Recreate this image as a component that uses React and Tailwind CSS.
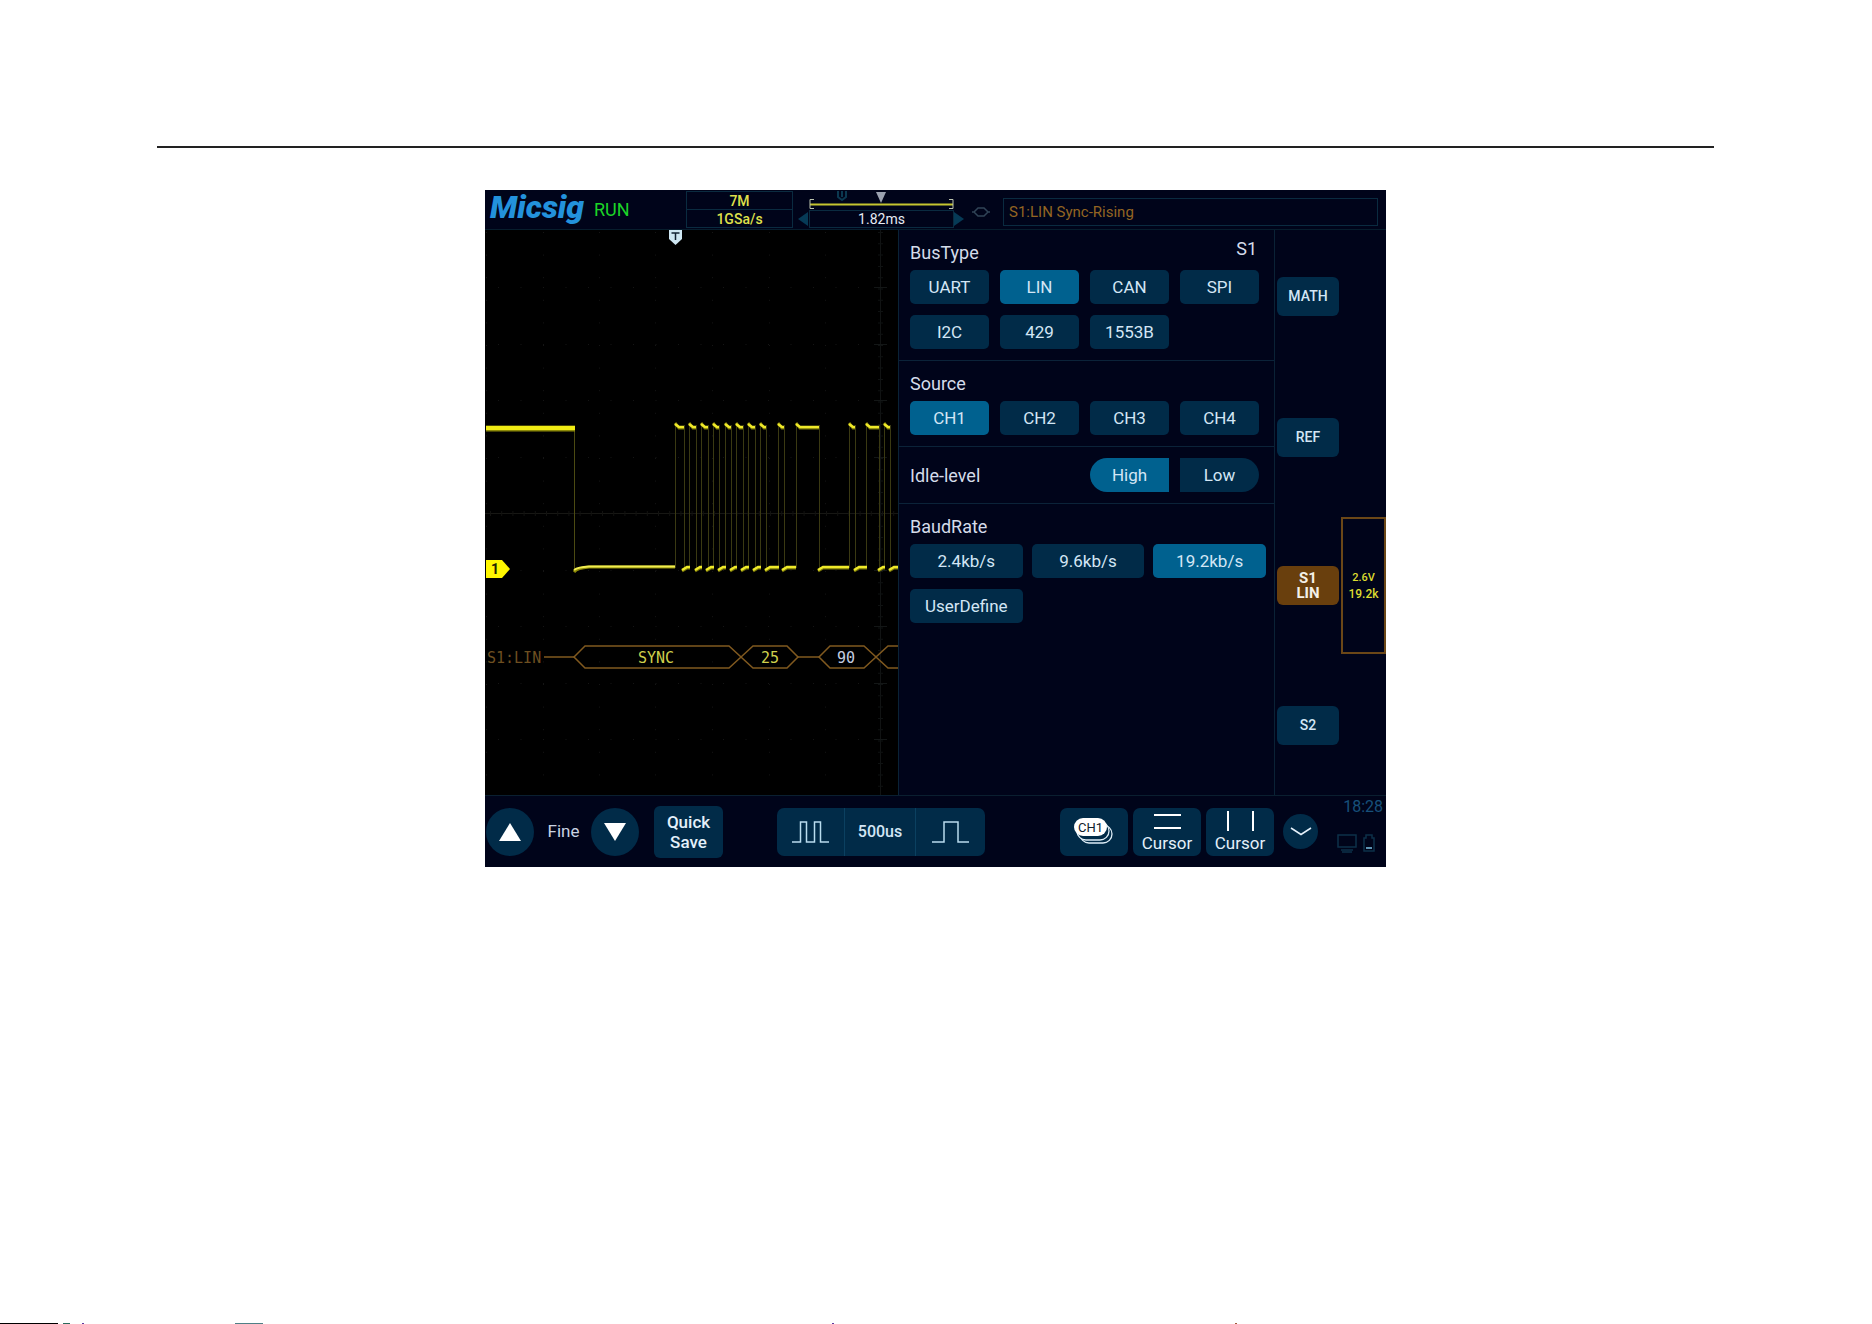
import React from "react";

const HIGH = [[190, 199], [204, 211], [216, 223], [228, 234], [240, 246], [251, 258], [263, 270], [275, 281], [293, 299], [311, 334], [364, 370], [381, 394], [399, 405]];
const LOW = [[198, 205], [211, 217], [222, 229], [234, 241], [246, 252], [257, 264], [269, 276], [281, 294], [298, 311], [334, 364], [370, 382], [394, 400], [405, 413]];
const ROWS = [57, 114, 170, 227, 340, 396, 453, 509];
const COLS = [1, 58, 114, 170, 227, 284, 340];

function Choice({ children, active, shape = "rounded-[5px]" }) {
  return (
    <button
      type="button"
      aria-pressed={!!active}
      className={`h-[34px] min-w-0 text-[17px] leading-none text-[#d3e6f5] ${shape} ${active ? "bg-[#00618f]" : "bg-[#012b48]"}`}
    >
      {children}
    </button>
  );
}

function Section({ title, aside, children, last }) {
  return (
    <section className={`pl-[11px] pt-[11px] pb-[11px] ${last ? "" : "border-b border-[#0b2339]"}`}>
      <div className="mb-[5px] flex h-6 items-center justify-between pr-[17px]">
        <h2 className="text-[18px] leading-6 text-[#d5dcea]">{title}</h2>
        {aside && <span className="self-start text-[18px] leading-4 text-[#d5dcea]">{aside}</span>}
      </div>
      {children}
    </section>
  );
}

function Scope() {
  return (
    <svg className="h-full w-full bg-black" viewBox="0 0 413 565" preserveAspectRatio="xMinYMin slice" aria-label="Channel 1 waveform">
      <g stroke="#151515" strokeWidth="1">
        {ROWS.map((y) => <path key={y} d={`M13 ${y}.5H413`} strokeDasharray="1 21.5" />)}
        {COLS.map((x) => <path key={x} d={`M${x}.5 2V565`} strokeDasharray="1 21.6" />)}
        <path d="M0 283.5H413" stroke="#171714" />
        <path d="M5 283.5H413" strokeWidth="5" strokeDasharray="1 10.2" stroke="#121210" />
        <path d="M395.5 0V565" stroke="#111313" />
        <path d="M395.5 2V565" strokeWidth="5" strokeDasharray="1 10.3" stroke="#0f1212" />
        {ROWS.map((y) => <path key={y} d={`M389 ${y}.5H402`} stroke="#131616" />)}
      </g>

      <g stroke="#3a3912" strokeWidth="1">
        <path d="M89.5 198V340M190.5 195V338" stroke="#4b4a12" />
        {HIGH.map(([a, b]) => <path key={a} d={`M${a}.5 195V338M${b}.5 195V338`} />)}
      </g>
      <path d="M1 198.5H90" stroke="#8d8a08" strokeWidth="6" />
      <path d="M1 198H90" stroke="#f0ec14" strokeWidth="4" />
      <path d="M89 342Q92 338 104 337H190" fill="none" stroke="#8d8a08" strokeWidth="3" />
      <path d="M89 340Q93 337 104 336.500H190" fill="none" stroke="#f2ee50" strokeWidth="2" />
      <g fill="none" strokeWidth="3" stroke="#7d7a08">
        {HIGH.map(([a, b]) => <path key={a} d={`M${a} 193L${a + 4} 198H${b}`} />)}
        {LOW.map(([a, b]) => <path key={a} d={`M${a - 1} 341L${a + 4} 338H${b}`} />)}
      </g>
      <g fill="none" stroke="#efe92a" strokeWidth="2.500">
        {HIGH.map(([a, b]) => <path key={a} d={`M${a} 194L${a + 4} 197H${b}`} />)}
        {LOW.map(([a, b]) => <path key={a} d={`M${a - 1} 340L${a + 4} 337H${b}`} />)}
      </g>

      <path d="M184 0H197V9L190.500 15L184 9Z" fill="#cfe7f3" />
      <path d="M186.500 3H194.500M190.500 3V10" stroke="#123" strokeWidth="1.500" />
      <path d="M1 330H17L25 339L17 348H1Z" fill="#fff700" />
      <text x="6" y="344" fontFamily="Roboto, sans-serif" fontSize="14" fontWeight="700" fill="#222200">1</text>

      <g fill="none" stroke="#80591f" strokeWidth="1.500">
        <path d="M59 427H89M313 427H334" />
        <path d="M89 427L100 416H244L256 427L244 438H100Z" />
        <path d="M256 427L268 416H302L313 427L302 438H268Z" />
        <path d="M334 427L345 416H379L391 427L379 438H345Z" />
        <path d="M413 416H403L391 427L403 438H413" />
      </g>
      <g fontFamily="'DejaVu Sans Mono', monospace" fontSize="15">
        <text x="2" y="432.500" fill="#6e4f20">S1:LIN</text>
        <text x="153" y="432.500" fill="#cfd04c">SYNC</text>
        <text x="276" y="432.500" fill="#cfd04c">25</text>
        <text x="352" y="432.500" fill="#c3cde0">90</text>
      </g>
    </svg>
  );
}

function Header() {
  return (
    <header className="flex h-10 items-start border-b border-[#071d2d]">
      <div className="w-[109px] pl-[5px] font-[Roboto,sans-serif] text-[32px] font-black italic leading-[35px] text-[#2392dc]">Micsig</div>
      <div className="flex-1 pt-[8px] text-[18px] leading-6 text-[#1bd527]">RUN</div>
      <div className="mt-px h-[37px] w-[107px] border border-[#0a2b40] text-center text-[14px] font-medium text-[#dfe04b]">
        <div className="h-[18px] border-b border-[#0a2b40] leading-[19px]">7M</div>
        <div className="leading-[19px]">1GSa/s</div>
      </div>
      <svg className="ml-[5px] mt-[22px] h-[14px] w-[10px]" viewBox="0 0 10 14"><path d="M10 0V14L0 7Z" fill="#063a56" /></svg>
      <div className="ml-px w-[145px]">
        <svg className="block h-5 w-full" viewBox="0 0 145 20">
          <path d="M29 1V7L33 10L37 7V1M33 1V7" fill="none" stroke="#0b3850" strokeWidth="2" />
          <path d="M67 2H77L72 13Z" fill="#9ba2b0" />
          <path d="M1 14.500H144" stroke="#c5c530" strokeWidth="2" />
          <path d="M5 9.500H1V18.500H5M140 9.500H144V18.500H140" fill="none" stroke="#bcc4ae" />
        </svg>
        <div className="h-[18px] border border-[#0a2b40] text-center text-[14px] leading-[17px] text-[#e6ebf4]">1.82ms</div>
      </div>
      <svg className="mt-[22px] h-[14px] w-[10px]" viewBox="0 0 10 14"><path d="M0 0V14L10 7Z" fill="#063a56" /></svg>
      <svg className="mx-[8px] mt-[17px] h-[10px] w-[18px]" viewBox="0 0 18 10"><path d="M0 5H2L6 1H12L16 5L12 9H6L2 5M16 5H18" fill="none" stroke="#304457" strokeWidth="1.500" /></svg>
      <div className="ml-[5px] mr-[8px] mt-[8px] h-7 w-[375px] border border-[#0a2b40] pl-[5px] text-[15px] leading-[26px] text-[#936522]">S1:LIN Sync-Rising</div>
    </header>
  );
}

function BusPanel() {
  return (
    <div className="border-x border-[#0a2236] bg-[#00041a]">
      <Section title="BusType" aside="S1">
        <div className="grid grid-cols-4 gap-[11px] pr-[15px]">
          <Choice>UART</Choice><Choice active>LIN</Choice><Choice>CAN</Choice><Choice>SPI</Choice>
          <Choice>I2C</Choice><Choice>429</Choice><Choice>1553B</Choice>
        </div>
      </Section>
      <Section title="Source">
        <div className="grid grid-cols-4 gap-[11px] pr-[15px]">
          <Choice active>CH1</Choice><Choice>CH2</Choice><Choice>CH3</Choice><Choice>CH4</Choice>
        </div>
      </Section>
      <section className="grid grid-cols-4 items-center gap-[11px] border-b border-[#0b2339] py-[11px] pl-[11px] pr-[15px]">
        <h2 className="col-span-2 text-[18px] text-[#d5dcea]">Idle-level</h2>
        <Choice active shape="rounded-l-full">High</Choice>
        <Choice shape="rounded-r-full">Low</Choice>
      </section>
      <Section title="BaudRate" last>
        <div className="grid grid-cols-3 gap-x-[9px] gap-y-[11px] pr-[8px]">
          <Choice>2.4kb/s</Choice><Choice>9.6kb/s</Choice><Choice active>19.2kb/s</Choice>
          <Choice>UserDefine</Choice>
        </div>
      </Section>
    </div>
  );
}

const SIDE = "h-[39px] w-[62px] shrink-0 rounded-[6px] text-[14px] font-medium text-[#d3e6f5]";

function SideBar() {
  return (
    <aside className="flex flex-col pb-[50px] pl-[2px] pt-[47px]">
      <button type="button" className={`${SIDE} bg-[#012b48]`}>MATH</button>
      <button type="button" className={`${SIDE} mt-[102px] bg-[#012b48]`}>REF</button>
      <div className="mt-[60px] flex items-center justify-between">
        <button type="button" className="flex h-[39px] w-[62px] shrink-0 flex-col items-center justify-center rounded-[6px] bg-[#693f0d] text-[15px] font-bold leading-[15px] text-[#f4f0e8]">
          <span>S1</span>
          <span>LIN</span>
        </button>
        <div className="flex h-[137px] w-[45px] flex-col items-center justify-center border-2 border-[#6b4717] text-[#dcdc30]">
          <span className="text-[11px] font-medium leading-4">2.6V</span>
          <span className="text-[12px] font-medium leading-4">19.2k</span>
        </div>
      </div>
      <button type="button" className={`${SIDE} mt-[52px] bg-[#012b48]`}>S2</button>
    </aside>
  );
}

const KEY = "shrink-0 bg-[#012b48] text-[#e4f0fa]";

function Footer() {
  return (
    <footer className="flex h-[72px] items-center border-t border-[#0a1f30] pl-px">
      <button type="button" aria-label="Increase" className={`${KEY} flex h-12 w-12 items-center justify-center rounded-full`}>
        <svg className="h-[18px] w-[22px]" viewBox="0 0 22 18"><path d="M11 0L22 18H0Z" fill="#fff" /></svg>
      </button>
      <span className="w-[57px] pl-[2px] text-center text-[17px] text-[#c9d3e2]">Fine</span>
      <button type="button" aria-label="Decrease" className={`${KEY} flex h-12 w-12 items-center justify-center rounded-full`}>
        <svg className="h-[18px] w-[22px]" viewBox="0 0 22 18"><path d="M11 18L22 0H0Z" fill="#fff" /></svg>
      </button>
      <button type="button" className={`${KEY} ml-[15px] h-[52px] w-[69px] rounded-[6px] text-[17px] font-medium leading-5`}>Quick<br />Save</button>
      <div className="ml-[54px] mr-auto flex h-12 overflow-hidden rounded-[7px]">
        <button type="button" aria-label="Shorter time base" className={`${KEY} flex w-[67px] items-center justify-center`}>
          <svg className="h-[22px] w-[37px]" viewBox="0 0 37 22"><path d="M0 21H8.500V1H14.500V21H22.500V1H28.500V21H37" fill="none" stroke="#b9dcee" strokeWidth="1.500" /></svg>
        </button>
        <div className="flex w-[72px] items-center justify-center border-x border-[#0b4060] bg-[#012b48] text-[16px] font-medium text-[#d3e6f5]">500us</div>
        <button type="button" aria-label="Longer time base" className={`${KEY} flex w-[69px] items-center justify-center`}>
          <svg className="h-[22px] w-[37px]" viewBox="0 0 37 22"><path d="M0 21H12V1H26V21H37" fill="none" stroke="#b9dcee" strokeWidth="1.500" /></svg>
        </button>
      </div>
      <div className="flex items-center gap-[5px]">
        <button type="button" className={`${KEY} flex h-12 w-[68px] items-center justify-center rounded-[7px]`}>
          <svg className="h-[30px] w-[42px]" viewBox="0 0 42 30">
            <rect x="7" y="8" width="32" height="18" rx="9" fill="#012b48" stroke="#dcecf6" strokeWidth="1.300" />
            <rect x="4" y="5" width="32" height="18" rx="9" fill="#012b48" stroke="#dcecf6" strokeWidth="1.300" />
            <rect x="1" y="1" width="33" height="18" rx="9" fill="#fff" />
            <text x="17.500" y="14.500" textAnchor="middle" fontFamily="Roboto, sans-serif" fontSize="13" fill="#10202c">CH1</text>
          </svg>
        </button>
        <button type="button" className={`${KEY} flex h-12 w-[68px] flex-col items-center justify-between rounded-[7px] pb-[2px] pt-[3px] text-[17px] leading-[22px]`}>
          <svg className="h-5 w-[27px]" viewBox="0 0 27 20"><path d="M0 4H27M0 17H27" stroke="#fff" strokeWidth="2" /></svg>
          Cursor
        </button>
        <button type="button" className={`${KEY} flex h-12 w-[68px] flex-col items-center justify-between rounded-[7px] pb-[2px] pt-[3px] text-[17px] leading-[22px]`}>
          <svg className="h-5 w-[27px]" viewBox="0 0 27 20"><path d="M1 0V20M26 0V20" stroke="#fff" strokeWidth="2" /></svg>
          Cursor
        </button>
      </div>
      <button type="button" aria-label="More" className={`${KEY} ml-[9px] flex h-[35px] w-[35px] items-center justify-center rounded-full`}>
        <svg className="h-[9px] w-[22px]" viewBox="0 0 22 9"><path d="M1 1L11 7.500L21 1" fill="none" stroke="#e4f0fa" strokeWidth="1.500" /></svg>
      </button>
      <div className="flex h-full w-[68px] flex-col items-end pr-[3px] pt-px">
        <span className="text-[16px] leading-5 text-[#17507a]">18:28</span>
        <svg className="mr-[6px] mt-[16px] h-5 w-10" viewBox="0 0 40 20" fill="none" stroke="#0c3049" strokeWidth="1.500">
          <path d="M1 2H19V14H1ZM4 17H16M5 19H15" />
          <path d="M27 5H29V2H35V5H37V18H27Z" />
          <path d="M29 15H35" stroke="#5d93b2" strokeWidth="2" />
        </svg>
      </div>
    </footer>
  );
}

export default function App() {
  return (
    <div className="flex min-h-screen flex-col bg-white font-[Roboto,sans-serif]">
      <main className="pl-[157px] pr-[158px] pt-[146px]">
        <hr className="border-t-2 border-[#222]" />
        <div className="mx-auto mt-[42px] w-full max-w-[901px] bg-[#00041a]">
          <Header />
          <div className="grid grid-cols-[413fr_377fr_111fr]">
            <Scope />
            <BusPanel />
            <SideBar />
          </div>
          <Footer />
        </div>
      </main>
      <div className="mt-auto flex h-px gap-[5px]">
        <span className="w-[58px] bg-black" />
        <span className="w-[7px] bg-[#2b6a5c]" />
        <span className="ml-[7px] w-[2px] bg-[#5a3aa0]" />
        <span className="ml-[146px] w-[28px] bg-[#4f7f86]" />
        <span className="ml-[564px] w-[2px] bg-[#5a3aa0]" />
        <span className="ml-[396px] w-[2px] bg-[#a05a3a]" />
      </div>
    </div>
  );
}
